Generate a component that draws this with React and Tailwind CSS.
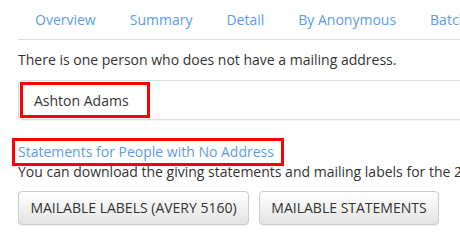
import React from 'react';

const TABS = ['Overview', 'Summary', 'Detail', 'By Anonymous', 'Batch'];

export default function App() {
  return (
    <div className="w-[460px] h-[240px] overflow-hidden bg-white" style={{ fontFamily: '"Open Sans", sans-serif' }}>
      <div className="w-[760px] pl-[18px] text-[14px] leading-[20px] text-[#333]">
        {/* Tabs */}
        <ul className="flex border-b border-[#ddd] whitespace-nowrap">
          {TABS.map(t => (
            <li key={t} className="px-[17px] pt-[10px] pb-[9px] text-[#5b9bea]">{t}</li>
          ))}
        </ul>

        <p className="mt-[10px] mb-[10px]">There is one person who does not have a mailing address.</p>

        {/* List */}
        <div className="border border-[#ddd] rounded-l-[4px] p-[1px] shadow-[0_1px_1px_rgba(0,0,0,0.05)]">
          <div className="w-[130px] h-[36px] border-[3px] border-[#ff0000] pl-[11px] pt-[6px]">Ashton Adams</div>
        </div>

        {/* Link header */}
        <div className="relative mt-[22px] whitespace-nowrap">
          <a className="text-[#5b9bea]">Statements for People with No Address</a>
          <span className="absolute left-[-6px] top-[-4px] w-[272px] h-[28px] border-[3px] border-[#ff0000]" />
        </div>
        <p className="whitespace-nowrap">You can download the giving statements and mailing labels for the 2018 year for people without an address.</p>

        {/* Buttons */}
        <div className="flex gap-[10px] mt-[9px]">
          <button className="h-[34px] w-[231px] whitespace-nowrap border border-[#ccc] rounded-[4px] bg-gradient-to-b from-white to-[#e3e3e3] text-[#333] uppercase shadow-[0_1px_1px_rgba(0,0,0,0.08)]">Mailable Labels (Avery 5160)</button>
          <button className="h-[34px] w-[180px] whitespace-nowrap border border-[#ccc] rounded-[4px] bg-gradient-to-b from-white to-[#e3e3e3] text-[#333] uppercase shadow-[0_1px_1px_rgba(0,0,0,0.08)]">Mailable Statements</button>
        </div>
      </div>
    </div>
  );
}
